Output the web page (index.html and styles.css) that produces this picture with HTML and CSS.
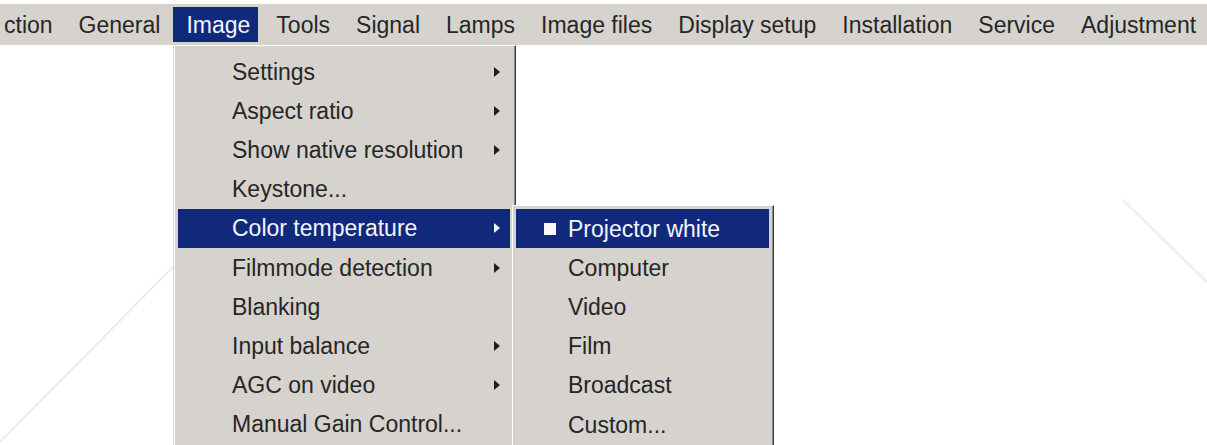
FILE: index.html
```html
<!DOCTYPE html>
<html lang="en">
<head>
    <meta charset="UTF-8">
    <title>Image menu - Color temperature</title>
    <link rel="stylesheet" href="styles.css">
</head>
<body>

    <!-- faint watermark strokes from the scanned manual -->
    <svg class="watermark" width="1207" height="445" viewBox="0 0 1207 445">
        <line x1="0" y1="442" x2="176" y2="264"></line>
        <line x1="1123" y1="200" x2="1207" y2="282"></line>
    </svg>

    <div class="menubar">
        <span class="bar-item first">ction</span>
        <span class="bar-item">General</span>
        <span class="bar-item active">Image</span>
        <span class="bar-item">Tools</span>
        <span class="bar-item">Signal</span>
        <span class="bar-item">Lamps</span>
        <span class="bar-item">Image files</span>
        <span class="bar-item">Display setup</span>
        <span class="bar-item">Installation</span>
        <span class="bar-item">Service</span>
        <span class="bar-item">Adjustment</span>
    </div>

    <div class="menu main-menu">
        <div class="menu-row"><span>Settings</span><i class="arrow"></i></div>
        <div class="menu-row"><span>Aspect ratio</span><i class="arrow"></i></div>
        <div class="menu-row"><span>Show native resolution</span><i class="arrow"></i></div>
        <div class="menu-row"><span>Keystone...</span></div>
        <div class="menu-row selected"><span>Color temperature</span><i class="arrow"></i></div>
        <div class="menu-row"><span>Filmmode detection</span><i class="arrow"></i></div>
        <div class="menu-row"><span>Blanking</span></div>
        <div class="menu-row"><span>Input balance</span><i class="arrow"></i></div>
        <div class="menu-row"><span>AGC on video</span><i class="arrow"></i></div>
        <div class="menu-row"><span>Manual Gain Control...</span></div>
    </div>

    <div class="menu sub-menu">
        <div class="menu-row selected"><i class="mark checked"></i><span>Projector white</span></div>
        <div class="menu-row"><i class="mark"></i><span>Computer</span></div>
        <div class="menu-row"><i class="mark"></i><span>Video</span></div>
        <div class="menu-row"><i class="mark"></i><span>Film</span></div>
        <div class="menu-row"><i class="mark"></i><span>Broadcast</span></div>
        <div class="menu-row"><i class="mark"></i><span>Custom...</span></div>
    </div>

</body>
</html>
```

FILE: styles.css
```css
body {
    margin: 0;
    width: 1207px;
    height: 445px;
    overflow: hidden;
    position: relative;
    background-color: #fff;
    font-family: "Liberation Sans", Arial, sans-serif;
    font-size: 23px;
    color: #262626;
}

.watermark {
    position: absolute;
    left: 0;
    top: 0;
    pointer-events: none;
}

.watermark line {
    stroke: #ececec;
    stroke-width: 2;
}

/* top menu bar */
.menubar {
    position: relative;
    margin-top: 4px;
    height: 41px;
    display: flex;
    align-items: center;
    background-color: #d6d3ce;
    white-space: nowrap;
}

.bar-item {
    height: 33px;
    line-height: 33px;
    padding: 2px 13px 0 13px;
}

.bar-item.first {
    padding-left: 4px;
}

.bar-item.active {
    padding: 2px 8px 0 13px;
    margin-right: 5px;
    background-color: #11297a;
    color: #f2f4ff;
}

/* drop down menus */
.menu {
    position: absolute;
    box-sizing: border-box;
    background-color: #d6d3ce;
    border-left: 1px solid #d6d3ce;
    border-top: 1px solid #fff;
    border-right: 1px solid #3c3c3c;
    box-shadow: inset 1px 0 0 #fff, inset -1px 0 0 #8a8a8a;
}

.main-menu {
    left: 173px;
    top: 45px;
    width: 343px;
    height: 420px;
    padding: 6px 5px 0 4px;
}

.sub-menu {
    left: 511px;
    top: 205px;
    width: 263px;
    height: 260px;
    padding: 3px 4px 0 4px;
}

.menu-row {
    height: 39.2px;
    display: flex;
    align-items: center;
    white-space: nowrap;
}

.menu-row span {
    padding-top: 1px;
}

.main-menu .menu-row {
    padding: 0 10px 0 54px;
}

.sub-menu .menu-row {
    padding-left: 28px;
}

.menu-row.selected {
    background-color: #11297a;
    color: #f2f4ff;
}

.arrow {
    margin-left: auto;
    width: 0;
    height: 0;
    border-left: 6px solid #1e1e1e;
    border-top: 5px solid transparent;
    border-bottom: 5px solid transparent;
}

.selected .arrow {
    border-left-color: #f2f4ff;
}

.mark {
    width: 12px;
    height: 12px;
    margin-right: 12px;
}

.mark.checked {
    background-color: #f8f8ff;
}
```
